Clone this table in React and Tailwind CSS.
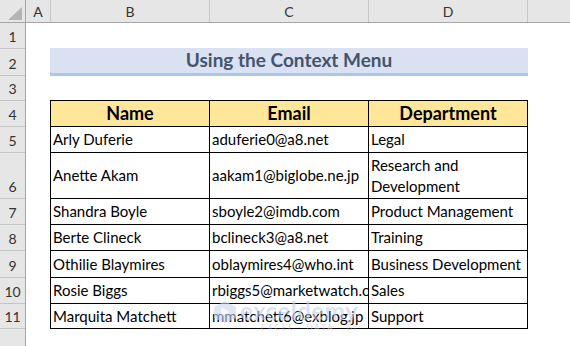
import React from 'react';

const rows = [
    { name: 'Arly Duferie', email: 'aduferie0@a8.net', dept: 'Legal', h: 'h-[26px]' },
    { name: 'Anette Akam', email: 'aakam1@biglobe.ne.jp', dept: 'Research and Development', h: 'h-[46px]' },
    { name: 'Shandra Boyle', email: 'sboyle2@imdb.com', dept: 'Product Management', h: 'h-[26px]' },
    { name: 'Berte Clineck', email: 'bclineck3@a8.net', dept: 'Training', h: 'h-[26px]' },
    { name: 'Othilie Blaymires', email: 'oblaymires4@who.int', dept: 'Business Development', h: 'h-[27px]' },
    { name: 'Rosie Biggs', email: 'rbiggs5@marketwatch.com', dept: 'Sales', h: 'h-[26px]' },
    { name: 'Marquita Matchett', email: 'mmatchett6@exblog.jp', dept: 'Support', h: 'h-[25px]' },
];

// row header heights, lined up with the sheet rows
const rowHeads = [
    { n: 1, h: 'h-[26px]' },
    { n: 2, h: 'h-[27px]' },
    { n: 3, h: 'h-[25px]' },
    { n: 4, h: 'h-[26px]' },
    { n: 5, h: 'h-[26px]' },
    { n: 6, h: 'h-[46px]' },
    { n: 7, h: 'h-[26px]' },
    { n: 8, h: 'h-[26px]' },
    { n: 9, h: 'h-[27px]' },
    { n: 10, h: 'h-[26px]' },
    { n: 11, h: 'h-[25px]' },
];

const Watermark = () => (
    <div className="absolute left-[212px] top-[300px] flex items-start gap-[2px] opacity-60 pointer-events-none">
        <svg width="26" height="24" viewBox="0 0 26 24">
            <polygon points="13,1 24,7 24,18 13,23 2,18 2,7" fill="#c9d6ec" />
            <polygon points="9,7 18,12 9,17" fill="#eef2fa" />
        </svg>
        <div className="flex flex-col items-end">
            <span className="text-[24px] leading-[22px] font-bold text-[#c3d1ea] tracking-[0.5px]">exceldemy</span>
            <span className="text-[8px] leading-[10px] text-[#c8c8c8] tracking-[2px]">EXCEL · DATA · BI</span>
        </div>
    </div>
);

const App = () => {
    return (
        <div className="relative w-[570px] h-[346px] overflow-hidden bg-white font-['Lato','Liberation_Sans',sans-serif] text-black">
            {/* column header strip */}
            <div className="flex h-[23px] bg-[#e6e6e6] border-b border-[#a6a6a6] text-[14px] text-[#333]">
                <div className="relative w-[26px] shrink-0 border-r border-[#a6a6a6]">
                    <svg className="absolute left-[8px] top-[7px]" width="14" height="13" viewBox="0 0 14 13">
                        <polygon points="14,0 14,13 0,13" fill="#b4b4b4" />
                    </svg>
                </div>
                <div className="w-[25px] shrink-0 border-r border-[#c6c6c6] flex items-center justify-center">A</div>
                <div className="w-[159px] shrink-0 border-r border-[#c6c6c6] flex items-center justify-center">B</div>
                <div className="w-[159px] shrink-0 border-r border-[#c6c6c6] flex items-center justify-center">C</div>
                <div className="w-[159px] shrink-0 border-r border-[#c6c6c6] flex items-center justify-center">D</div>
                <div className="flex-1" />
            </div>

            <div className="flex">
                {/* row header column */}
                <div className="w-[26px] shrink-0 h-[323px] bg-[#e6e6e6] border-r border-[#a6a6a6] text-[14px] text-[#333]">
                    {rowHeads.map((r) => (
                        <div
                            key={r.n}
                            className={`${r.h} border-b border-[#c6c6c6] flex items-end justify-center pb-[1px]`}
                        >
                            {r.n}
                        </div>
                    ))}
                </div>

                {/* sheet area */}
                <div className="flex-1 pl-[24px]">
                    <div className="h-[25px]" />
                    <div className="w-[478px] h-[28px] bg-[#d9e1f2] border-b-[3px] border-[#a9c8e8] flex items-center justify-center text-[19px] font-bold text-[#44546a]">
                        Using the Context Menu
                    </div>
                    <div className="h-[24px]" />

                    <div className="w-[478px] border-l border-t border-black grid grid-cols-[159px_159px_159px]">
                        {['Name', 'Email', 'Department'].map((t) => (
                            <div
                                key={t}
                                className="h-[26px] bg-[#ffe699] border-r border-b border-black flex items-center justify-center text-[18px] font-bold"
                            >
                                {t}
                            </div>
                        ))}
                        {rows.map((r) => (
                            <React.Fragment key={r.email}>
                                <div className={`${r.h} border-r border-b border-black flex items-center pl-[2px] text-[15px] whitespace-nowrap overflow-hidden`}>
                                    {r.name}
                                </div>
                                <div className={`${r.h} border-r border-b border-black flex items-center pl-[2px] text-[15px] whitespace-nowrap overflow-hidden`}>
                                    {r.email}
                                </div>
                                <div className={`${r.h} border-r border-b border-black flex items-center pl-[2px] text-[15px] leading-[21px] overflow-hidden`}>
                                    {r.dept === 'Research and Development' ? (
                                        <span>Research and<br />Development</span>
                                    ) : (
                                        <span className="whitespace-nowrap">{r.dept}</span>
                                    )}
                                </div>
                            </React.Fragment>
                        ))}
                    </div>
                </div>
            </div>

            <Watermark />
        </div>
    );
};

export default App;
